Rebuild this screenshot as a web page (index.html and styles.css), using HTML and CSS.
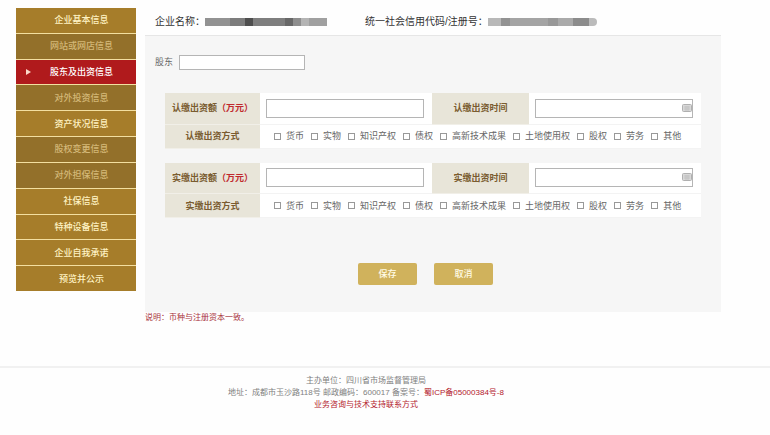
FILE: index.html
```html
<!DOCTYPE html>
<html lang="zh-CN">
<head>
    <meta charset="utf-8">
    <title>股东及出资信息</title>
    <link rel="stylesheet" href="styles.css">
</head>
<body>
<div class="page">
    <div class="wrap">
        <nav class="menu">
            <a href="#">企业基本信息</a>
            <a href="#" class="sub">网站或网店信息</a>
            <a href="#" class="active">股东及出资信息</a>
            <a href="#" class="sub">对外投资信息</a>
            <a href="#">资产状况信息</a>
            <a href="#" class="sub">股权变更信息</a>
            <a href="#" class="sub">对外担保信息</a>
            <a href="#">社保信息</a>
            <a href="#">特种设备信息</a>
            <a href="#">企业自我承诺</a>
            <a href="#">预览并公示</a>
        </nav>
        <main class="main">
            <div class="company">
                <div class="company-item">企业名称：<span class="mask mask-name"></span></div>
                <div class="company-item">统一社会信用代码/注册号：<span class="mask mask-code"></span></div>
            </div>
            <form class="panel">
                <div class="holder">
                    <label for="holder">股东</label>
                    <input type="text" id="holder">
                </div>
                <table class="invest">
                    <tr>
                        <th><label for="sub-sum">认缴出资额<span class="red">（万元）</span></label></th>
                        <td><input type="text" id="sub-sum"></td>
                        <th class="wide"><label for="sub-date">认缴出资时间</label></th>
                        <td>
                            <div class="date">
                                <input type="text" id="sub-date">
                                <svg class="cal" viewBox="0 0 10 8"><rect x="0.5" y="0.5" width="9" height="7" rx="1" fill="#d8d8d8" stroke="#b0b0b0"/><path d="M2 3h6M2 5h6M4 2v5M6 2v5" stroke="#bbb" stroke-width="0.6"/></svg>
                            </div>
                        </td>
                    </tr>
                    <tr>
                        <th>认缴出资方式</th>
                        <td colspan="3">
                            <div class="ways">
                                <label><input type="checkbox">货币</label>
                                <label><input type="checkbox">实物</label>
                                <label><input type="checkbox">知识产权</label>
                                <label><input type="checkbox">债权</label>
                                <label><input type="checkbox">高新技术成果</label>
                                <label><input type="checkbox">土地使用权</label>
                                <label><input type="checkbox">股权</label>
                                <label><input type="checkbox">劳务</label>
                                <label><input type="checkbox">其他</label>
                            </div>
                        </td>
                    </tr>
                </table>
                <table class="invest">
                    <tr>
                        <th><label for="paid-sum">实缴出资额<span class="red">（万元）</span></label></th>
                        <td><input type="text" id="paid-sum"></td>
                        <th class="wide"><label for="paid-date">实缴出资时间</label></th>
                        <td>
                            <div class="date">
                                <input type="text" id="paid-date">
                                <svg class="cal" viewBox="0 0 10 8"><rect x="0.5" y="0.5" width="9" height="7" rx="1" fill="#d8d8d8" stroke="#b0b0b0"/><path d="M2 3h6M2 5h6M4 2v5M6 2v5" stroke="#bbb" stroke-width="0.6"/></svg>
                            </div>
                        </td>
                    </tr>
                    <tr>
                        <th>实缴出资方式</th>
                        <td colspan="3">
                            <div class="ways">
                                <label><input type="checkbox">货币</label>
                                <label><input type="checkbox">实物</label>
                                <label><input type="checkbox">知识产权</label>
                                <label><input type="checkbox">债权</label>
                                <label><input type="checkbox">高新技术成果</label>
                                <label><input type="checkbox">土地使用权</label>
                                <label><input type="checkbox">股权</label>
                                <label><input type="checkbox">劳务</label>
                                <label><input type="checkbox">其他</label>
                            </div>
                        </td>
                    </tr>
                </table>
                <div class="buttons">
                    <button type="button">保存</button>
                    <button type="button">取消</button>
                </div>
            </form>
            <p class="note">说明：币种与注册资本一致。</p>
        </main>
    </div>
    <footer class="footer">
        <p>主办单位：四川省市场监督管理局</p>
        <p>地址：成都市玉沙路118号 邮政编码：600017 备案号：<a href="#">蜀ICP备05000384号-8</a></p>
        <p><a href="#">业务咨询与技术支持联系方式</a></p>
    </footer>
</div>
</body>
</html>
```
FILE: styles.css
```css
* {
    box-sizing: border-box;
}

body {
    margin: 0;
    background: #fefefe;
    color: #666;
    font: 9px/16px "Liberation Sans", "Noto Sans CJK SC", sans-serif;
}

p {
    margin: 0;
}

a {
    text-decoration: none;
}

.wrap {
    display: flex;
    gap: 9px;
    padding: 8px 49px 0 16px;
}

/* left menu */
.menu {
    flex: none;
    align-self: flex-start;
    display: grid;
    grid-auto-rows: 1fr;
    gap: 1px;
    width: 120px;
    height: 283px;
    background: #f3dfa0;
}

.menu a {
    display: flex;
    align-items: center;
    justify-content: center;
    position: relative;
    padding-left: 11px;
    background: #a67d2a;
    color: #fff3c4;
    font-weight: 500;
}

.menu .sub {
    background: #93702a;
    color: #d3b878;
}

.menu .active {
    background: #b01a1c;
    color: #fff;
}

.menu .active::before {
    content: "";
    position: absolute;
    left: 10px;
    border: 3px solid transparent;
    border-left: 5px solid #fbd9c8;
    border-right: 0;
}

.main {
    flex: 1;
    min-width: 0;
}

.company {
    display: flex;
    gap: 38px;
    height: 28px;
    padding: 5px 10px;
    border-bottom: 1px solid #e6e6e6;
    color: #333;
    font-size: 10px;
    white-space: nowrap;
}

.company-item {
    display: flex;
    align-items: center;
}

.mask {
    height: 8px;
}

.mask-name {
    width: 122px;
    background: linear-gradient(90deg, #929292 0 25px, #7c7c7c 25px 40px, #4e4e4e 40px 48px, #7e7e7e 48px 80px, #686868 80px 88px, #8e8e8e 88px 96px, #b4b4b4 96px 104px, #a0a0a0 104px);
}

.mask-code {
    width: 109px;
    border-radius: 0 4px 4px 0;
    background: linear-gradient(90deg, #b8b8b8 0 13px, #929292 13px 22px, #a4a4a4 22px 60px, #989898 60px 70px, #aaa 70px 85px, #8c8c8c 85px 101px, #bbb 101px);
}

/* form */
.panel {
    padding: 18px 20px 27px;
    background: #f6f6f6;
}

input[type="text"] {
    display: block;
    width: 100%;
    height: 19px;
    padding: 0 4px;
    border: 1px solid #b5b5b5;
    background: #fff;
    font: inherit;
}

.holder {
    display: flex;
    align-items: center;
    gap: 6px;
    margin: 0 -10px 23px;
}

.holder input[type="text"] {
    width: 126px;
    height: 15px;
}

.invest {
    width: 100%;
    margin-bottom: 14px;
    border-collapse: collapse;
    table-layout: fixed;
    background: #fff;
}

.invest th {
    width: 95px;
    padding: 0;
    border-bottom: 1px solid #f1efe8;
    background: #e8e5d9;
    color: #7a5c30;
    font-weight: 700;
}

.invest .wide {
    width: 97px;
}

.invest td {
    height: 24px;
    padding: 0 8px 0 6px;
    border-bottom: 1px solid #f3f3f3;
}

.invest tr:first-child td {
    height: 31px;
}

.invest .red {
    color: #c0282d;
}

.date {
    position: relative;
}

.cal {
    position: absolute;
    top: 5px;
    right: 1px;
    width: 10px;
    height: 8px;
}

.ways {
    display: flex;
    gap: 7px;
    padding-left: 8px;
    white-space: nowrap;
}

.ways label {
    display: flex;
    align-items: center;
    gap: 5px;
}

.ways input {
    appearance: none;
    width: 7px;
    height: 7px;
    margin: 0;
    border: 1px solid #999;
    background: #fff;
}

.buttons {
    display: flex;
    justify-content: center;
    gap: 17px;
    margin-top: 45px;
    padding-right: 15px;
}

.buttons button {
    width: 59px;
    height: 22px;
    padding: 0;
    border: 0;
    border-radius: 2px;
    background: #d0b25c;
    color: #fffbe6;
    font: inherit;
    font-weight: 500;
}

.note {
    color: #a8323c;
    font-size: 8px;
    line-height: 12px;
}

.footer {
    margin-top: 42px;
    padding: 7px 54px 0 16px;
    border-top: 2px solid #f1f1f1;
    color: #808080;
    font-size: 8px;
    line-height: 12px;
    text-align: center;
}

.footer a {
    color: #b3202c;
}
```
